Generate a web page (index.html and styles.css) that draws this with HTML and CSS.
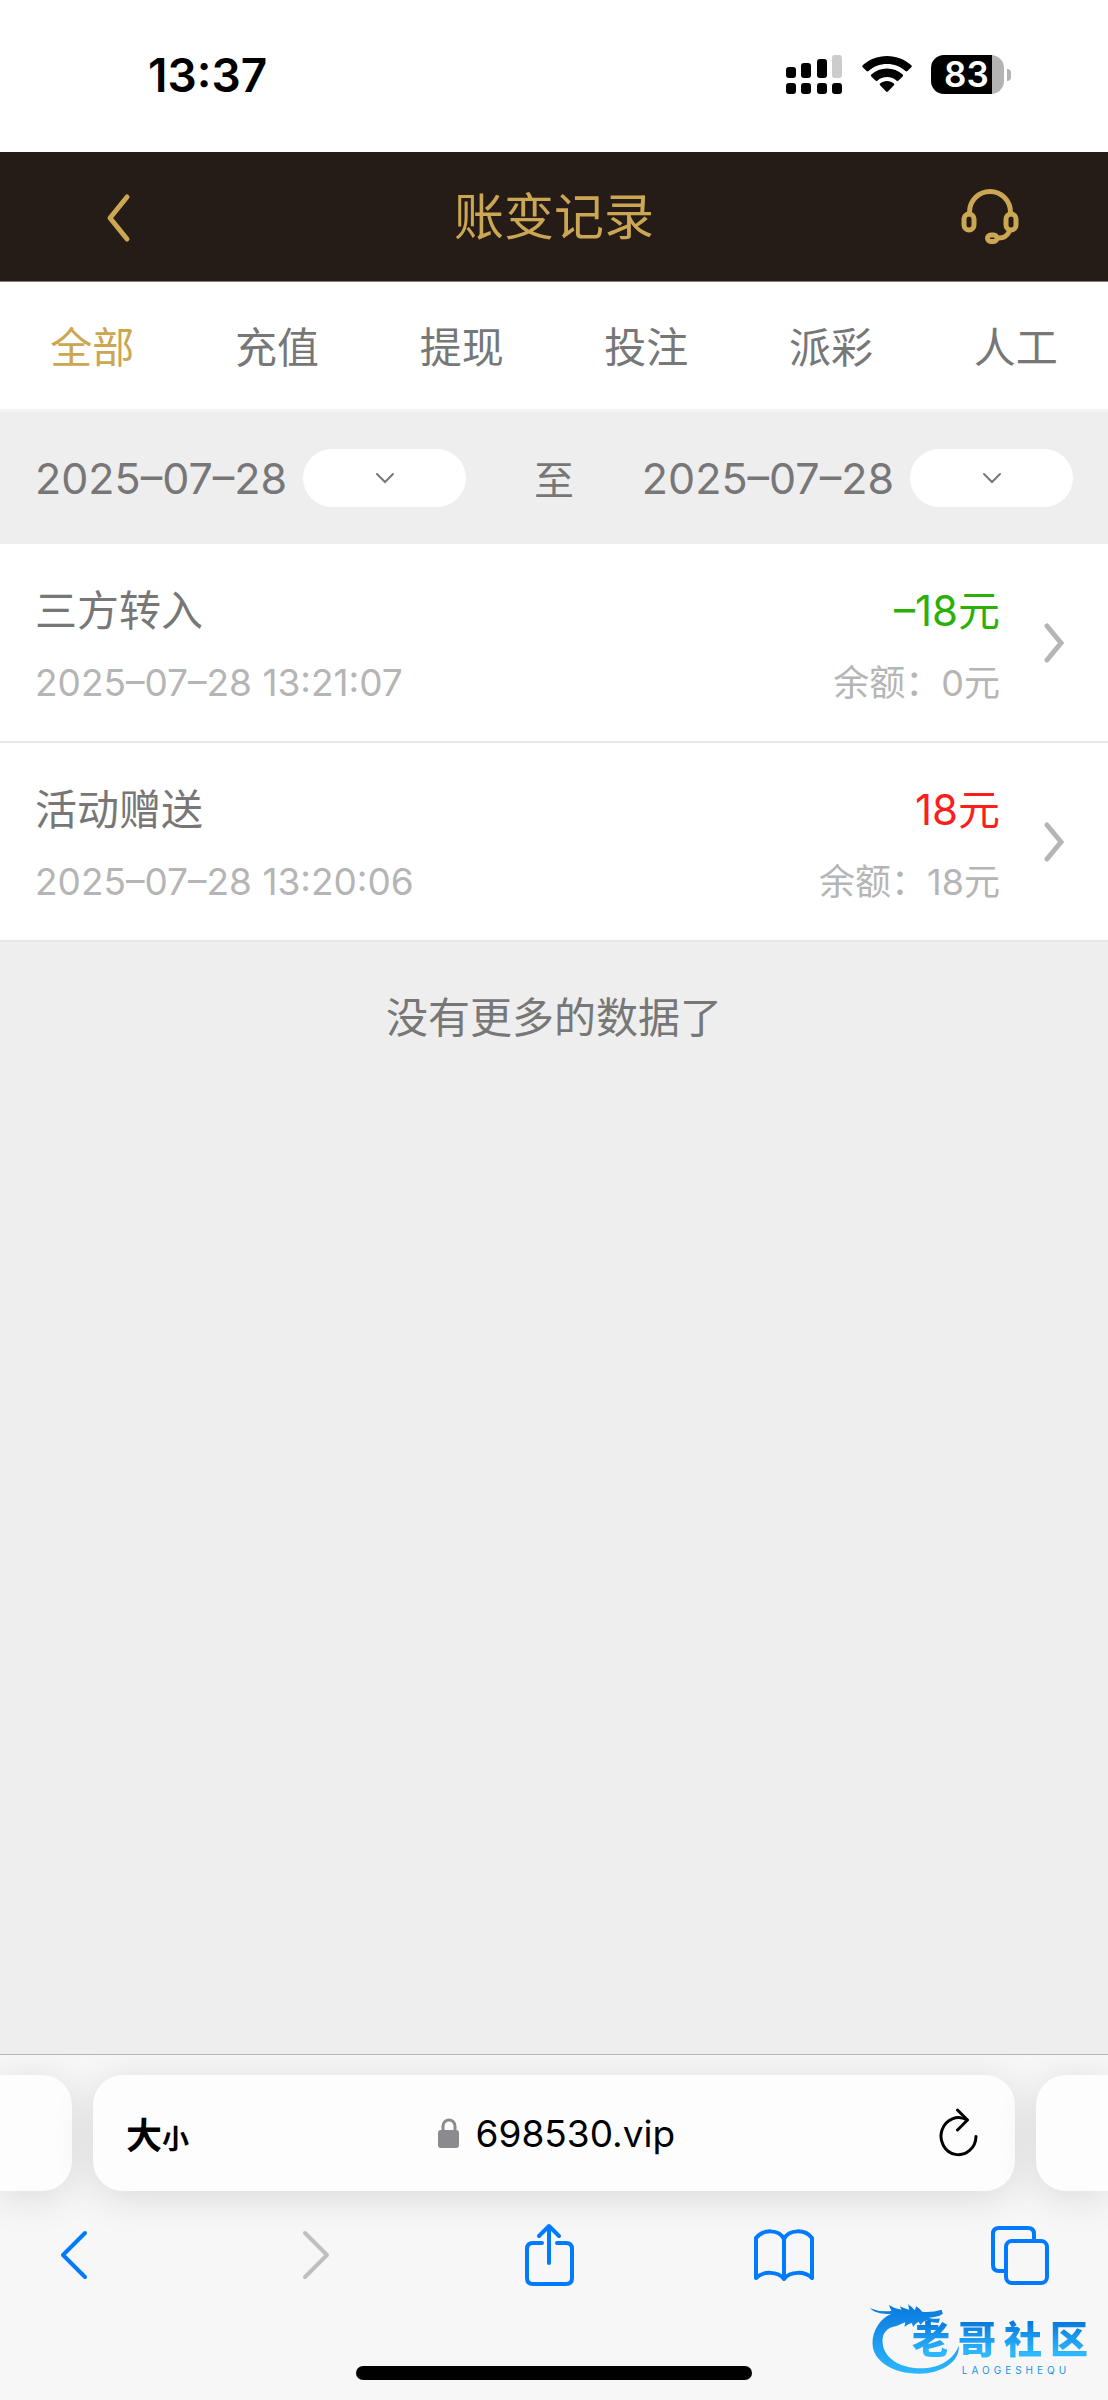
FILE: index.html
```html
<!DOCTYPE html>
<html lang="zh-CN">
<head>
    <meta charset="UTF-8">
    <meta name="viewport" content="width=device-width, initial-scale=1">
    <title>账变记录</title>
    <link rel="stylesheet" href="styles.css">
</head>
<body>
    <div class="status-bar">
        <span class="time">13:37</span>
        <div class="status-icons">
            <svg width="57" height="39" viewBox="0 0 57 39">
                <rect x="0" y="12" width="10" height="11" rx="3"/>
                <rect x="15" y="8" width="10" height="15" rx="3"/>
                <rect x="31" y="4" width="10" height="19" rx="3"/>
                <rect x="46" y="0" width="10" height="23" rx="3" fill="#ccc"/>
                <rect x="0" y="28" width="10" height="11" rx="3"/>
                <rect x="15" y="28" width="10" height="11" rx="3"/>
                <rect x="31" y="28" width="10" height="11" rx="3"/>
                <rect x="46" y="28" width="10" height="11" rx="3"/>
            </svg>
            <svg width="50" height="39" viewBox="0 0 50 39">
                <path d="M25 1C15.500 1 7 4.500 .7 10.300q-.9 1 0 1.900l3.900 3.900q.9.800 1.900 0C11.500 11.500 18 9 25 9s13.500 2.500 18.500 7.100q1 .8 1.900 0l3.900-3.900q.9-.9 0-1.900C43 4.500 34.500 1 25 1z"/>
                <path d="M25 13.500c-6 0-11.500 2.300-15.700 6q-.9.900 0 1.900l4.200 4.200q.9.800 1.900.1C18 23.300 21.300 22 25 22s7 1.300 9.600 3.700q1 .7 1.900-.1l4.200-4.200q.9-1 0-1.900c-4.200-3.700-9.700-6-15.700-6z"/>
                <path d="M25 26c-2.600 0-5 .9-6.900 2.400q-.9 1 0 1.900l6 6.300q.9.900 1.800 0l6-6.300q.9-.9 0-1.900C30 26.900 27.600 26 25 26z"/>
            </svg>
            <div class="battery">
                <span class="battery-level">83</span>
                <span class="battery-tip"></span>
            </div>
        </div>
    </div>

    <header class="header">
        <button class="icon-btn" aria-label="返回">
            <svg width="60" height="60" viewBox="0 0 60 60" fill="none" stroke="#cba653" stroke-width="5" stroke-linecap="round" stroke-linejoin="round">
                <path d="M39 10 22 31l17 21"/>
            </svg>
        </button>
        <h1>账变记录</h1>
        <button class="icon-btn" aria-label="客服">
            <svg width="60" height="60" viewBox="0 0 60 60" fill="none" stroke="#cba653" stroke-width="5" stroke-linecap="round">
                <path d="M9.500 27v-2a20.500 20.500 0 0 1 41 0v2"/>
                <rect x="4" y="27" width="10" height="16" rx="5"/>
                <rect x="46" y="27" width="10" height="16" rx="5"/>
                <path d="M49 45q-3 6-10 6"/>
                <rect x="27.500" y="48" width="9.500" height="6.500" rx="3.200"/>
            </svg>
        </button>
    </header>

    <nav class="tabs">
        <a href="#" class="active">全部</a>
        <a href="#">充值</a>
        <a href="#">提现</a>
        <a href="#">投注</a>
        <a href="#">派彩</a>
        <a href="#">人工</a>
    </nav>

    <div class="filter">
        <div class="date-field">
            <label for="start">2025–07–28</label>
            <div class="picker">
                <select id="start"><option></option></select>
                <svg width="20" height="12" viewBox="0 0 20 12"><path d="m2 2 8 8 8-8"/></svg>
            </div>
        </div>
        <span class="to">至</span>
        <div class="date-field">
            <label for="end">2025–07–28</label>
            <div class="picker">
                <select id="end"><option></option></select>
                <svg width="20" height="12" viewBox="0 0 20 12"><path d="m2 2 8 8 8-8"/></svg>
            </div>
        </div>
    </div>

    <main>
        <a href="#" class="record">
            <div class="info">
                <div class="name">三方转入</div>
                <div class="sub">2025–07–28 13:21:07</div>
            </div>
            <div class="money">
                <div class="amount out">–18元</div>
                <div class="sub">余额：0元</div>
            </div>
            <svg class="arrow" width="22" height="42" viewBox="0 0 22 42"><path d="m3 4 14 17L3 38"/></svg>
        </a>
        <a href="#" class="record">
            <div class="info">
                <div class="name">活动赠送</div>
                <div class="sub">2025–07–28 13:20:06</div>
            </div>
            <div class="money">
                <div class="amount in">18元</div>
                <div class="sub">余额：18元</div>
            </div>
            <svg class="arrow" width="22" height="42" viewBox="0 0 22 42"><path d="m3 4 14 17L3 38"/></svg>
        </a>
        <p class="no-more">没有更多的数据了</p>
    </main>

    <footer class="browser">
        <div class="address-row">
            <div class="card side left"></div>
            <div class="card address">
                <button class="text-size" aria-label="文字大小">大<small>小</small></button>
                <div class="site">
                    <svg width="22" height="30" viewBox="0 0 22 30">
                        <path d="M5 14V8a6 6 0 0 1 12 0v6" fill="none" stroke="#8a8a8f" stroke-width="3"/>
                        <rect x="0" y="12" width="21" height="18" rx="3" fill="#8a8a8f"/>
                    </svg>
                    <input type="text" value="698530.vip" aria-label="网址">
                </div>
                <button class="reload" aria-label="刷新">
                    <svg width="42" height="50" viewBox="0 0 42 50" fill="none" stroke="#000" stroke-width="3" stroke-linecap="round" stroke-linejoin="round">
                        <path d="M38 28.500A17.500 18.500 0 1 1 29 12"/>
                        <path d="m19.500 2 10 10-10 10"/>
                    </svg>
                </button>
            </div>
            <div class="card side right"></div>
        </div>
        <div class="toolbar">
            <button aria-label="后退">
                <svg width="64" height="64" viewBox="0 0 64 64"><path d="M42 10 20 32l22 22"/></svg>
            </button>
            <button aria-label="前进" disabled>
                <svg width="64" height="64" viewBox="0 0 64 64"><path d="m26 10 22 22-22 22"/></svg>
            </button>
            <button aria-label="分享">
                <svg width="64" height="64" viewBox="0 0 64 64">
                    <path d="M26 20h-9q-6 0-6 6v29q0 6 6 6h33q6 0 6-6V26q0-6-6-6h-9M33 40V3M23 13 33 3l10 10"/>
                </svg>
            </button>
            <button aria-label="书签">
                <svg width="64" height="64" viewBox="0 0 64 64">
                    <path d="M32 16C27 6 11 6 4 15v40c7-7 22-7 28 1 6-8 21-8 28-1V15C53 6 37 6 32 16zv40"/>
                </svg>
            </button>
            <button aria-label="标签页">
                <svg width="64" height="64" viewBox="0 0 64 64">
                    <path d="M16 48h-5q-6 0-6-6V11q0-6 6-6h29q6 0 6 6v7"/>
                    <rect x="18" y="18" width="41" height="42" rx="6"/>
                </svg>
            </button>
        </div>
        <div class="home-bar"></div>
    </footer>

    <div class="watermark">
        <svg width="97" height="80" viewBox="50 20 290 240">
            <defs>
                <linearGradient id="blue" x1="0" y1="0" x2="0" y2="1">
                    <stop offset="0" stop-color="#0878dc"/>
                    <stop offset="1" stop-color="#2db7ff"/>
                </linearGradient>
            </defs>
            <path fill="url(#blue)" d="M58 54q30 12 65 8l-8-18q18 12 38 14l-5-10q15 8 28 10l-3-16q13 9 20 18l4-12q12 8 18 16 30 3 58-6l4 12-10 6q-20 6-32 6 16 6 33 2l-3 13q-22 2-37-7-10 2-18 14l-6-10q-8 4-16 16l-4-12q-10 2-22 12l2-14q-12 6-24 10C108 112 96 128 96 152c0 48 50 82 115 82 55 0 98-26 114-68 3 50-55 84-119 84-80 0-140-38-140-92 0-38 22-72 56-88-22 2-46 0-64-16z"/>
        </svg>
        <div class="watermark-text">
            <strong>老哥社区</strong>
            <span>LAOGESHEQU</span>
        </div>
    </div>
</body>
</html>
```

FILE: styles.css
```css
* {
    box-sizing: border-box;
}
body {
    margin: 0;
    min-height: 100vh;
    display: flex;
    flex-direction: column;
    position: relative;
    font-family: Inter, "Noto Sans CJK SC", sans-serif;
    font-size: 42px;
    color: #777;
    background-color: #eee;
}
a {
    color: inherit;
    text-decoration: none;
}
button {
    padding: 0;
    border: none;
    background: none;
    font-family: inherit;
    cursor: pointer;
}
svg {
    display: block;
}

/* status bar */
.status-bar {
    display: flex;
    justify-content: space-between;
    align-items: center;
    height: 152px;
    padding: 0 97px 3px 148px;
    background: white;
    color: black;
}
.time {
    font-size: 46px;
    font-weight: 600;
}
.status-icons {
    display: flex;
    align-items: center;
    gap: 19px;
}
.battery {
    display: flex;
    align-items: center;
    gap: 3px;
}
.battery-level {
    width: 73px;
    height: 39px;
    padding-left: 13px;
    border-radius: 13px;
    background: linear-gradient(to right, black 61px, #b3b3b3 61px);
    color: white;
    font-size: 35px;
    font-weight: 600;
    line-height: 39px;
}
.battery-tip {
    width: 4px;
    height: 12px;
    border-radius: 0 4px 4px 0;
    background: #b3b3b3;
}

/* header */
.header {
    display: flex;
    justify-content: space-between;
    align-items: center;
    height: 130px;
    padding: 0 88px;
    background-color: #251c18;
    border-bottom: 1px solid #8a7f7c;
    color: #cba653;
}
.header h1 {
    margin: 0;
    padding-bottom: 8px;
    font-size: 50px;
    font-weight: 400;
}

.tabs {
    display: flex;
    height: 130px;
    background: white;
    border-bottom: 3px solid #f3f3f3;
}
.tabs a {
    flex: 1;
    text-align: center;
    line-height: 132px;
}
.tabs .active {
    color: #cba653;
}

/* date range */
.filter {
    display: flex;
    justify-content: space-between;
    align-items: center;
    height: 132px;
    padding: 0 35px;
}
.date-field {
    display: flex;
    align-items: center;
    gap: 16px;
}
.date-field label {
    font-size: 43px;
}
.to {
    font-size: 40px;
}
.picker {
    display: grid;
    place-items: center;
}
.picker select,
.picker svg {
    grid-area: 1 / 1;
}
.picker select {
    appearance: none;
    width: 163px;
    height: 58px;
    border: none;
    border-radius: 29px;
    background: white;
}
.picker svg {
    fill: none;
    stroke: #777;
    stroke-width: 2;
    stroke-linecap: round;
    pointer-events: none;
}

/* records */
main {
    flex: 1;
}
.record {
    display: flex;
    align-items: center;
    height: 199px;
    padding: 0 42px 0 35px;
    background: white;
    border-bottom: 2px solid #e8e8e8;
}
.info {
    flex: 1;
}
.info,
.money {
    padding-top: 8px;
}
.name,
.amount {
    line-height: 72px;
}
.sub {
    font-size: 36px;
    line-height: 72px;
    color: #b5b5b5;
}
.info .sub {
    font-size: 37px;
}
.money {
    text-align: right;
}
.out {
    color: #2bb00a;
}
.in {
    color: #fb1e1e;
}
.arrow {
    margin-left: 44px;
    fill: none;
    stroke: #b5b5b5;
    stroke-width: 5;
    stroke-linecap: round;
}
.no-more {
    margin: 0;
    padding-top: 45px;
    line-height: 62px;
    text-align: center;
}

/* bottom browser bar */
.browser {
    padding: 20px 0;
    background: #f7f7f7;
    border-top: 1px solid #b8b8b8;
    overflow: hidden;
}
.address-row {
    display: flex;
    gap: 21px;
}
.card {
    height: 116px;
    border-radius: 30px;
    background: #fdfdfd;
    box-shadow: 0 6px 40px rgba(0, 0, 0, 0.12);
}
.side {
    width: 72px;
}
.left {
    border-radius: 0 30px 30px 0;
}
.right {
    border-radius: 30px 0 0 30px;
}
.address {
    flex: 1;
    display: flex;
    justify-content: space-between;
    align-items: center;
    padding: 0 35px 0 33px;
}
.text-size {
    color: black;
    font-size: 36px;
    font-weight: 700;
}
.text-size small {
    font-size: 27px;
}
.site {
    display: flex;
    align-items: center;
    gap: 16px;
}
.site input {
    width: 214px;
    padding: 0;
    border: none;
    background: none;
    font-family: inherit;
    font-size: 37px;
    color: black;
}
.toolbar {
    display: flex;
    justify-content: space-between;
    padding: 32px 56px 0 43px;
}
.toolbar svg {
    fill: none;
    stroke: #007aff;
    stroke-width: 4;
    stroke-linecap: round;
    stroke-linejoin: round;
}
.toolbar button:disabled svg {
    stroke: #bfbfbf;
}
.home-bar {
    width: 396px;
    height: 14px;
    margin: 79px auto 0;
    border-radius: 7px;
    background: black;
}

/* site logo over the page corner */
.watermark {
    position: absolute;
    right: 12px;
    bottom: 23px;
    display: flex;
    align-items: flex-end;
    color: #1593ec;
}
.watermark-text {
    display: flex;
    flex-direction: column;
    align-items: center;
    margin-left: -52px;
}
.watermark strong {
    font-family: "Noto Sans CJK SC", sans-serif;
    font-size: 38px;
    font-weight: 900;
    line-height: 52px;
    letter-spacing: 8px;
    background: linear-gradient(#0878dc 20%, #2db7ff 80%);
    background-clip: text;
    color: transparent;
}
.watermark span {
    padding-left: 24px;
    font-size: 10px;
    line-height: 14px;
    letter-spacing: 4px;
}
```
